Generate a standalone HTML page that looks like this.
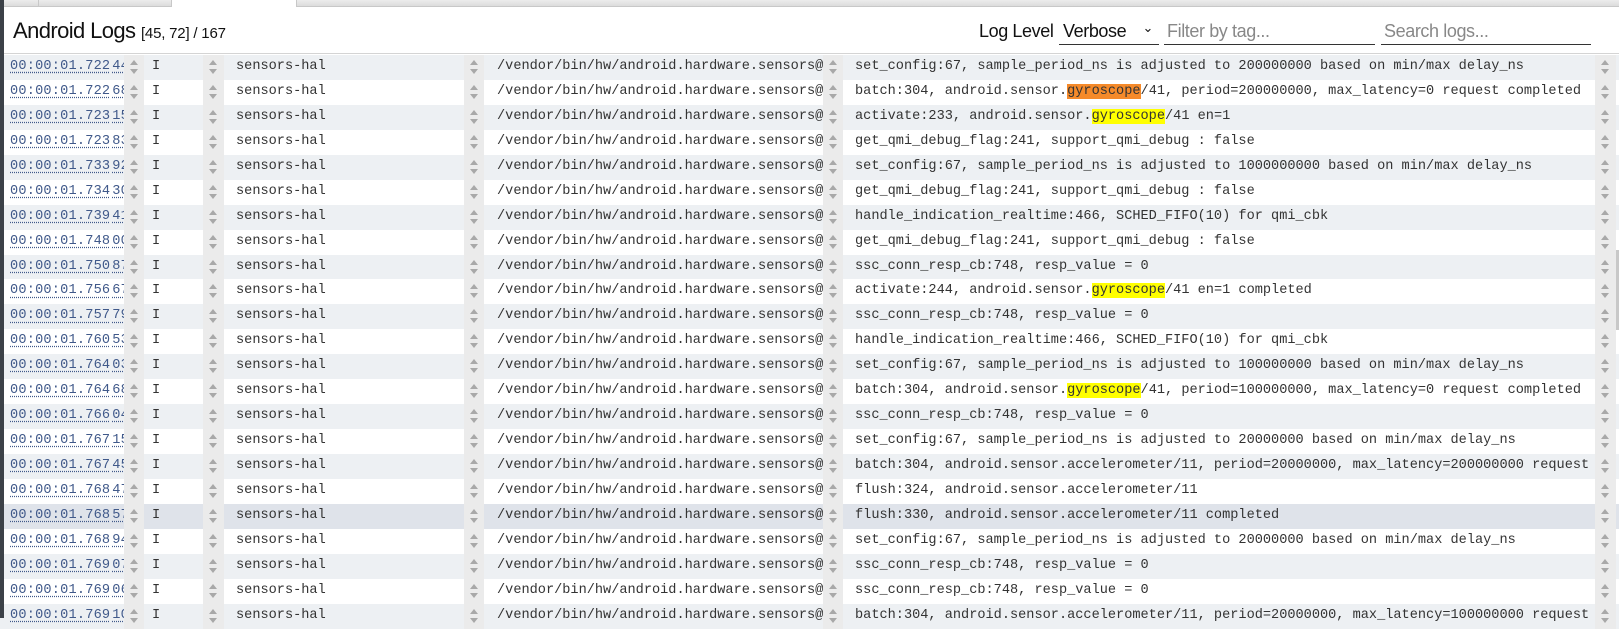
<!DOCTYPE html>
<html><head><meta charset="utf-8"><style>
*{box-sizing:border-box;margin:0;padding:0}
body{width:1619px;height:618px;overflow:hidden;background:#fff;font-family:"Liberation Sans",sans-serif;position:relative}
.lbar{position:absolute;left:0;top:0;width:4px;height:618px;background:#3c4148;z-index:5}
.tabs{position:absolute;left:0;top:0;width:1619px;height:7px;background:linear-gradient(#ececec,#dcdcdc);border-bottom:1px solid #c8c8c8}
.tab{position:absolute;top:0;height:7px;border-right:1px solid #c8c8c8}
.hdr{position:absolute;left:0;top:7px;width:1619px;height:47px;border-bottom:1px solid #d4d4d4;background:#fff}
.title{position:absolute;left:13px;top:11px;font-size:22px;color:#111;letter-spacing:-0.6px}
.title small{font-size:15px;letter-spacing:-0.2px}
.ll{position:absolute;left:979px;top:14px;font-size:18px;color:#111;letter-spacing:-0.4px}
.sel{position:absolute;left:1059px;top:12px;width:100px;height:26px;border-bottom:1.5px solid #333;font-size:18px;color:#111;padding:2px 0 0 4px;letter-spacing:-0.4px}
.sel span{position:absolute;right:6px;top:1px;font-size:13px}
.inp{position:absolute;top:12px;height:26px;border-bottom:1.5px solid #333;font-size:18px;color:#888;padding:2px 0 0 3px;letter-spacing:-0.4px}
.rows{position:absolute;left:0;top:55px;width:1619px}
.r{position:relative;height:24.95px;font-family:"Liberation Mono",monospace;font-size:13.6px;color:#333;white-space:nowrap}
.r.o{background:#edf0f3}
.r.h{background:#dfe3ea}
.c{position:absolute;top:0;height:100%;overflow:hidden;line-height:24.9px}
.t{left:10px;width:114px;color:#40598a;letter-spacing:0.2px}
.t u{text-decoration:underline dotted #40598a;text-underline-offset:3px}
.t i{font-style:normal;margin-left:2px}
.sp{background:#ebebeb;width:20px}
.sp:before{content:"";position:absolute;left:6px;top:5px;border:4px solid transparent;border-bottom:5px solid #a8a8a8;border-top:0}
.sp:after{content:"";position:absolute;left:6px;top:14px;border:4px solid transparent;border-top:5px solid #a8a8a8;border-bottom:0}
.or{background:#f58a2a}
.ye{background:#ffff00}
.sb{position:absolute;left:1616px;top:250px;width:3px;height:80px;background:#c8c8c8}
</style></head><body>
<div class="lbar"></div>
<div class="tabs"><div class="tab" style="left:4px;width:35px"></div><div class="tab" style="left:39px;width:133px"></div><div class="tab" style="left:172px;width:125px;background:#fff"></div></div>
<div class="hdr">
<div class="title">Android Logs <small>[45, 72] / 167</small></div>
<div class="ll">Log Level</div>
<div class="sel">Verbose<span>&#8964;</span></div>
<div class="inp" style="left:1164px;width:211px">Filter by tag...</div>
<div class="inp" style="left:1381px;width:210px">Search logs...</div>
</div>
<div class="rows" id="rows">
</div>
<div class="sb"></div>
<script>
var d=[
["722 44","set_config:67, sample_period_ns is adjusted to 200000000 based on min/max delay_ns"],
["722 68","batch:304, android.sensor.<span class=or>gyroscope</span>/41, period=200000000, max_latency=0 request completed"],
["723 15","activate:233, android.sensor.<span class=ye>gyroscope</span>/41 en=1"],
["723 83","get_qmi_debug_flag:241, support_qmi_debug : false"],
["733 92","set_config:67, sample_period_ns is adjusted to 1000000000 based on min/max delay_ns"],
["734 30","get_qmi_debug_flag:241, support_qmi_debug : false"],
["739 41","handle_indication_realtime:466, SCHED_FIFO(10) for qmi_cbk"],
["748 00","get_qmi_debug_flag:241, support_qmi_debug : false"],
["750 87","ssc_conn_resp_cb:748, resp_value = 0"],
["756 67","activate:244, android.sensor.<span class=ye>gyroscope</span>/41 en=1 completed"],
["757 79","ssc_conn_resp_cb:748, resp_value = 0"],
["760 53","handle_indication_realtime:466, SCHED_FIFO(10) for qmi_cbk"],
["764 03","set_config:67, sample_period_ns is adjusted to 100000000 based on min/max delay_ns"],
["764 68","batch:304, android.sensor.<span class=ye>gyroscope</span>/41, period=100000000, max_latency=0 request completed"],
["766 04","ssc_conn_resp_cb:748, resp_value = 0"],
["767 15","set_config:67, sample_period_ns is adjusted to 20000000 based on min/max delay_ns"],
["767 45","batch:304, android.sensor.accelerometer/11, period=20000000, max_latency=200000000 request completed"],
["768 47","flush:324, android.sensor.accelerometer/11"],
["768 57","flush:330, android.sensor.accelerometer/11 completed"],
["768 94","set_config:67, sample_period_ns is adjusted to 20000000 based on min/max delay_ns"],
["769 07","ssc_conn_resp_cb:748, resp_value = 0"],
["769 06","ssc_conn_resp_cb:748, resp_value = 0"],
["769 10","batch:304, android.sensor.accelerometer/11, period=20000000, max_latency=100000000 request completed"]
];
var h="";
d.forEach(function(x,i){
var cls=i==18?"r h":(i%2==0?"r o":"r");
var p=x[0].split(" ");
h+='<div class="'+cls+'"><div class="c t"><u>00:00:01.'+p[0]+'<i>'+p[1]+'</i></u></div>'+
'<div class="c sp" style="left:124px"></div><div class="c" style="left:152px;width:50px">I</div>'+
'<div class="c sp" style="left:203px;width:21px"></div><div class="c" style="left:236px;width:228px">sensors-hal</div>'+
'<div class="c sp" style="left:464px"></div><div class="c" style="left:497px;width:326px">/vendor/bin/hw/android.hardware.sensors@2.0-service</div>'+
'<div class="c sp" style="left:823px"></div><div class="c" style="left:855px;width:740px">'+x[1]+'</div>'+
'<div class="c sp" style="left:1595px;width:21px"></div></div>';
});
document.getElementById("rows").innerHTML=h;
</script>
</body></html>
